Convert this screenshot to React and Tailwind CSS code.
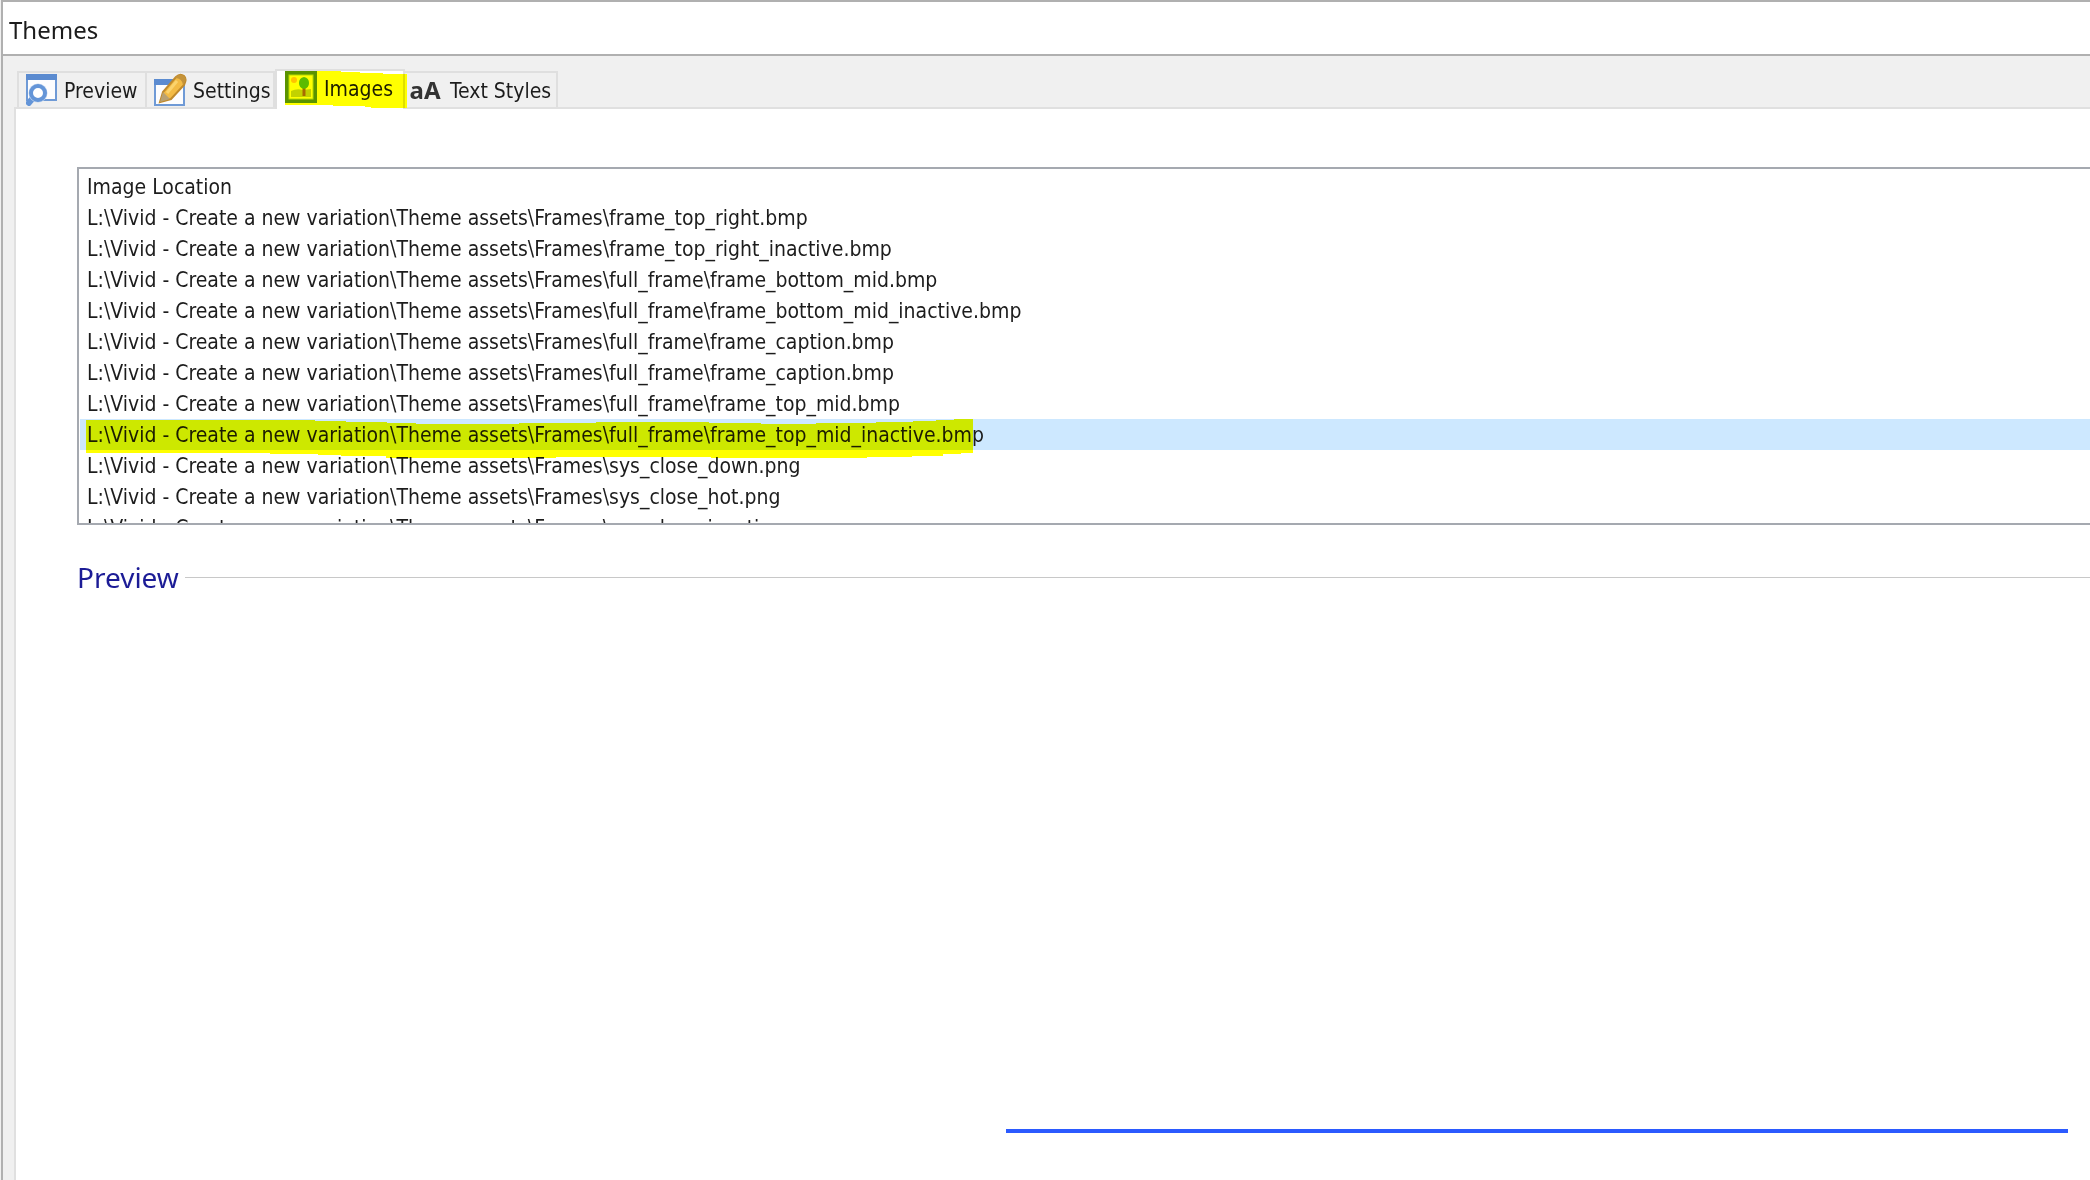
import React from 'react';

const ROOT = 'L:\\Vivid - Create a new variation\\Theme assets\\Frames\\';

const images = [
  'frame_top_right.bmp',
  'frame_top_right_inactive.bmp',
  'full_frame\\frame_bottom_mid.bmp',
  'full_frame\\frame_bottom_mid_inactive.bmp',
  'full_frame\\frame_caption.bmp',
  'full_frame\\frame_caption.bmp',
  'full_frame\\frame_top_mid.bmp',
  'full_frame\\frame_top_mid_inactive.bmp',
  'sys_close_down.png',
  'sys_close_hot.png',
  'sys_close_inactive.png',
];

const SELECTED = 7;

const PreviewIcon = () => (
  <svg className="h-8 w-8 shrink-0" viewBox="0 0 32 32" aria-hidden="true">
    <rect x="1" y="1" width="29" height="25" fill="#fdfdfe" stroke="#6f9ad6" strokeWidth="2" />
    <rect x="0" y="0" width="31" height="6" fill="#5b8bd0" />
    <path d="M7 24 L1 31" stroke="#6495d8" strokeWidth="6" />
    <circle cx="12" cy="19" r="9.5" fill="#c3d6f0" />
    <circle cx="12" cy="19" r="7" fill="#fff" stroke="#6495d8" strokeWidth="4" />
  </svg>
);

const SettingsIcon = () => (
  <svg className="h-8 w-8 shrink-0 overflow-visible" viewBox="0 0 32 32" aria-hidden="true">
    <rect x="1" y="6" width="29" height="25" fill="#fdfdfe" stroke="#6f9ad6" strokeWidth="2" />
    <rect x="0" y="5" width="31" height="6" fill="#5b8bd0" />
    <path d="M6 28 L9 18 L22 3 Q26 -1 30 2 Q33 5 30 11 L17 25 Z" fill="#f3bb45" stroke="#c08a2c" strokeWidth="2" />
    <path d="M6 28 L9 18 L16 25 Z" fill="#b9a173" />
    <path d="M21 4 Q28 4 29 11 L31 8 Q33 4 30 2 Q26 -1 23 2 Z" fill="#c4933a" />
    <path d="M13 19 L23 7" stroke="#fbd36d" strokeWidth="3" />
  </svg>
);

const ImagesIcon = () => (
  <svg className="h-8 w-8 shrink-0" viewBox="0 0 32 32" aria-hidden="true">
    <rect x="2" y="2" width="28" height="28" fill="#fff" stroke="#5a9321" strokeWidth="4" />
    <rect x="4" y="4" width="24" height="24" fill="none" stroke="#b5d98e" />
    <circle cx="9" cy="9" r="3" fill="#ffc233" />
    <path d="M6 20 Q12 17 18 19 L26 18 V26 H6 Z" fill="#c2d27e" />
    <path d="M19 15 V25" stroke="#a86c28" strokeWidth="3" />
    <path d="M19 6 Q24 7 24 12 Q24 17 19 18 Q14 17 14 12 Q14 7 19 6 Z" fill="#5cbb1c" />
  </svg>
);

const TextIcon = () => (
  <span className="w-8 shrink-0 font-['Noto_Sans',sans-serif] text-2xl leading-8 font-bold text-[#333]" aria-hidden="true">
    aA
  </span>
);

const Tab = ({ icon, label, className }) => (
  <button
    type="button"
    role="tab"
    aria-selected="false"
    className={`flex h-9 items-center border-t-2 border-r-2 border-[#dfdfdf] bg-[#f0f0f0] ${className}`}
  >
    {icon}
    <span className="pt-1">{label}</span>
  </button>
);

const TabBar = () => (
  <div role="tablist" className="flex items-end pl-[17px] whitespace-nowrap">
    <Tab icon={<PreviewIcon />} label="Preview" className="w-[130px] gap-[6px] border-l-2 pl-[7px]" />
    <Tab icon={<SettingsIcon />} label="Settings" className="w-[128px] gap-[7px] border-r-0 pl-[7px]" />
    <button
      type="button"
      role="tab"
      aria-selected="true"
      className="relative z-10 -mb-[2px] flex h-10 w-[130px] items-start gap-[7px] border-2 border-b-0 border-[#dfdfdf] bg-white pl-2"
    >
      <ImagesIcon />
      <span className="pt-[2px] leading-8">Images</span>
      {/* marker stroke over the active tab */}
      <svg
        className="pointer-events-none absolute top-0 left-[6px] h-[38px] w-[124px] overflow-visible mix-blend-multiply"
        viewBox="0 0 124 38"
        aria-hidden="true"
      >
        <path d="M2 0 H58 V1 H77 V2 H100 V3 H124 V37 H88 V36 H82 V35 H50 V34 H2 Z" fill="#ffff00" />
      </svg>
    </button>
    <Tab icon={<TextIcon />} label="Text Styles" className="w-[153px] gap-[9px] pl-1" />
  </div>
);

const ImageList = () => (
  <div className="ml-[61px] h-[358px] overflow-hidden border-2 border-r-0 border-[#a5a9b0] pl-px">
    <table className="w-full border-collapse text-left whitespace-nowrap">
      <thead>
        <tr>
          <th className="p-0 pt-1 pl-[7px] leading-[29px] font-normal">Image Location</th>
        </tr>
      </thead>
      <tbody>
        {images.map((name, i) => (
          <tr key={i} className={i === SELECTED ? 'bg-[#cde8ff]' : ''}>
            <td className="relative p-0 pt-[2px] pl-[7px] leading-[29px]">
              {ROOT + name}
              {i === SELECTED && (
                <svg
                  className="pointer-events-none absolute top-0 left-[6px] z-10 h-10 w-[887px] mix-blend-multiply"
                  viewBox="0 0 887 40"
                  aria-hidden="true"
                >
                  <path
                    d="M0 1 H229 V2 H260 V3 H301 V4 H330 V5 H433 V4 H510 V3 H623 V4 H675 V5 H730 V4 H790 V3 H827 V2 H850 V1 H868 V0 H887 V34 H875 V35 H857 V37 H826 V38 H781 V39 H625 V38 H470 V39 H300 V37 H255 V36 H232 V35 H184 V34 H0 Z"
                    fill="#ffff00"
                  />
                </svg>
              )}
            </td>
          </tr>
        ))}
      </tbody>
    </table>
  </div>
);

export default function App() {
  return (
    <div className="flex min-h-screen flex-col overflow-hidden bg-[#f0f0f0] font-['DejaVu_Sans_Condensed','DejaVu_Sans',sans-serif] text-[21px] text-[#1c1c1c]">
      <div className="ml-px flex flex-1 flex-col border-t-2 border-l-2 border-[#b0b0b0]">
        <header className="border-b-2 border-[#b0b0b0] bg-white pl-[6px]">
          <h1 className="pt-1 font-['Noto_Sans',sans-serif] text-2xl leading-[48px]">Themes</h1>
        </header>
        <div className="-ml-[3px] pt-[13px]">
          <TabBar />
        </div>
        <main className="ml-[11px] flex flex-1 flex-col border-t-2 border-l-2 border-[#e0e0e0] bg-white pt-[58px]">
          <ImageList />
          <section className="flex flex-1 flex-col pb-[47px]">
            <div className="mt-[31px] ml-[61px] flex items-center gap-[6px]">
              <h2 className="font-['Noto_Sans',sans-serif] text-[28px] leading-[42px] text-[#1c1c96]">Preview</h2>
              <div className="h-px flex-1 bg-[#c8c8c8]" />
            </div>
            <div className="mt-auto mr-[22px] h-1 w-[1062px] max-w-full self-end bg-[#2b5aff]" />
          </section>
        </main>
      </div>
    </div>
  );
}
